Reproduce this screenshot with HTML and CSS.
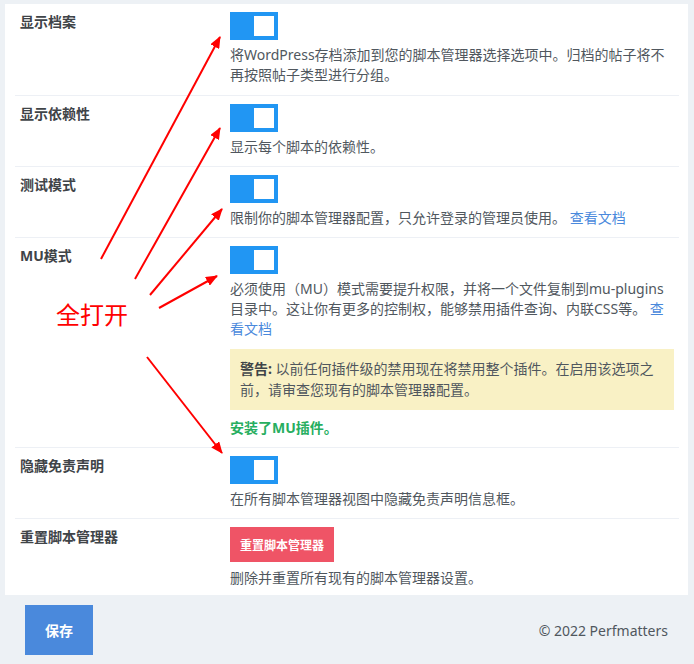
FILE: index.html
```html
<!DOCTYPE html>
<html lang="zh-CN">
<head>
    <meta charset="UTF-8">
    <title>脚本管理器设置</title>
    <link rel="stylesheet" href="styles.css">
</head>
<body>

    <div class="panel">
        <div class="row">
            <div class="row-label">显示档案</div>
            <div class="row-control">
                <span class="toggle"><span class="knob"></span></span>
                <p class="desc">将WordPress存档添加到您的脚本管理器选择选项中。归档的帖子将不再按照帖子类型进行分组。</p>
            </div>
        </div>

        <div class="row">
            <div class="row-label">显示依赖性</div>
            <div class="row-control">
                <span class="toggle"><span class="knob"></span></span>
                <p class="desc">显示每个脚本的依赖性。</p>
            </div>
        </div>

        <div class="row">
            <div class="row-label">测试模式</div>
            <div class="row-control">
                <span class="toggle"><span class="knob"></span></span>
                <p class="desc">限制你的脚本管理器配置，只允许登录的管理员使用。 <a href="#">查看文档</a></p>
            </div>
        </div>

        <div class="row">
            <div class="row-label">MU模式</div>
            <div class="row-control">
                <span class="toggle"><span class="knob"></span></span>
                <p class="desc">必须使用（MU）模式需要提升权限，并将一个文件复制到mu-plugins目录中。这让你有更多的控制权，能够禁用插件查询、内联CSS等。 <a href="#">查看文档</a></p>
                <div class="warning"><strong>警告:</strong> 以前任何插件级的禁用现在将禁用整个插件。在启用该选项之前，请审查您现有的脚本管理器配置。</div>
                <p class="success">安装了MU插件。</p>
            </div>
        </div>

        <div class="row">
            <div class="row-label">隐藏免责声明</div>
            <div class="row-control">
                <span class="toggle"><span class="knob"></span></span>
                <p class="desc">在所有脚本管理器视图中隐藏免责声明信息框。</p>
            </div>
        </div>

        <div class="row last">
            <div class="row-label">重置脚本管理器</div>
            <div class="row-control">
                <button class="btn-reset">重置脚本管理器</button>
                <p class="desc">删除并重置所有现有的脚本管理器设置。</p>
            </div>
        </div>
    </div>

    <div class="footer">
        <button class="btn-save">保存</button>
        <span class="copyright">© 2022 Perfmatters</span>
    </div>

    <!-- annotation layer -->
    <svg class="notes" width="694" height="664" viewBox="0 0 694 664">
        <defs>
            <marker id="head" markerUnits="userSpaceOnUse" markerWidth="12" markerHeight="10" refX="11" refY="5" orient="auto">
                <path d="M0,0 L12,5 L0,10 Z" fill="#ff0000"/>
            </marker>
        </defs>
        <g stroke="#ff0000" stroke-width="2" fill="none" marker-end="url(#head)">
            <line x1="101" y1="259" x2="220" y2="37"/>
            <line x1="135" y1="279" x2="220" y2="128"/>
            <line x1="150" y1="295" x2="222" y2="209"/>
            <line x1="159" y1="308" x2="217" y2="276"/>
            <line x1="147" y1="357" x2="222" y2="453"/>
        </g>
    </svg>
    <div class="note-text">全打开</div>

</body>
</html>
```

FILE: styles.css
```css
body {
    margin: 0;
    position: relative;
    min-height: 664px;
    background-color: #edf1f5;
    font-family: "Noto Sans", "Noto Sans CJK SC", sans-serif;
    font-size: 14px;
    color: #444;
}

.panel {
    margin: 4px 6px 0 5px;
    padding: 0 9px 0 10px;
    background-color: #fff;
}

.row {
    display: flex;
    padding: 8px 0 9px;
    border-top: 1px solid #edf0f5;
}

.row:first-child {
    border-top: none;
    padding-bottom: 10px;
}

.row.last {
    padding-bottom: 7px;
}

.row-label {
    width: 210px;
    padding-left: 5px;
    font-weight: bold;
    line-height: 20px;
    color: #3f4448;
}

.row-control {
    flex: 1;
    padding-right: 5px;
}

.toggle {
    display: block;
    position: relative;
    width: 48px;
    height: 28px;
    background-color: #2196f3;
}

.knob {
    position: absolute;
    top: 4px;
    right: 4px;
    width: 20px;
    height: 20px;
    background-color: #fff;
}

.desc {
    margin: 5px 0 0;
    line-height: 20px;
    color: #50575e;
}

.desc a {
    color: #4a89dc;
    text-decoration: none;
}

.warning {
    margin-top: 10px;
    padding: 10px;
    line-height: 20.5px;
    background-color: #f9f1c5;
    color: #50575e;
}

.warning strong {
    color: #3f4448;
}

.success {
    margin: 8px 0 0;
    line-height: 20px;
    font-weight: bold;
    color: #27ae60;
}

.btn-reset {
    display: block;
    height: 35px;
    padding: 0 10px;
    border: none;
    background-color: #ef5466;
    color: #fff;
    font-family: inherit;
    font-size: 12px;
    font-weight: bold;
    cursor: pointer;
}

.btn-reset + .desc {
    margin-top: 6px;
}

.footer {
    display: flex;
    align-items: center;
    justify-content: space-between;
    padding: 10px 26px 0 25px;
}

.btn-save {
    width: 68px;
    height: 50px;
    border: none;
    background-color: #4a89dc;
    color: #fff;
    font-family: inherit;
    font-size: 14px;
    font-weight: bold;
    cursor: pointer;
}

.copyright {
    font-size: 14px;
    color: #50575e;
}

.notes {
    position: absolute;
    top: 0;
    left: 0;
    pointer-events: none;
}

.note-text {
    position: absolute;
    left: 56px;
    top: 301px;
    font-size: 24px;
    line-height: 28px;
    color: #ff0000;
}
```
